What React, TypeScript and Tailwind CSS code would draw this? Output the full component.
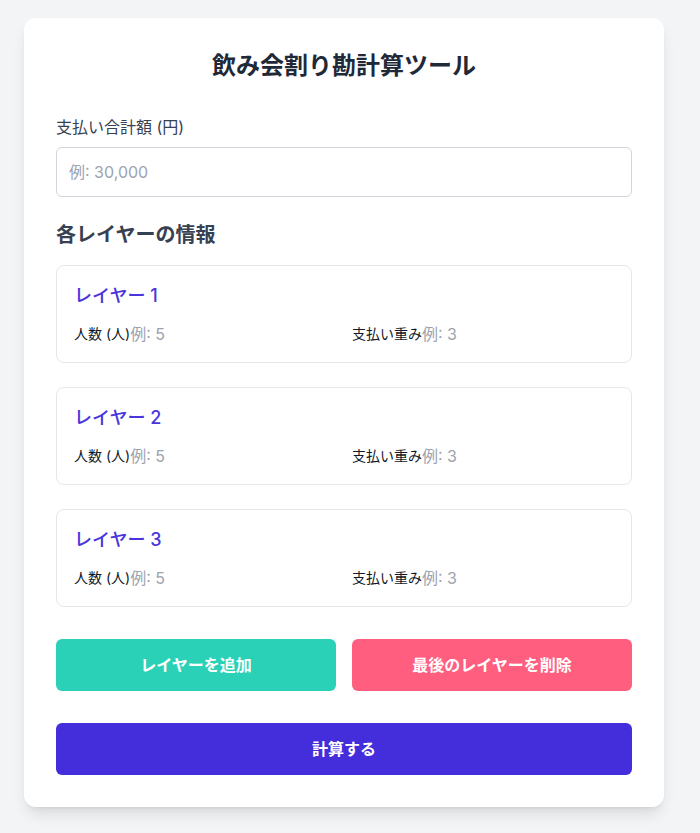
import React from "react";

const font = { fontFamily: '"Inter", "Noto Sans CJK JP", sans-serif' };

function Layer({ n }: { n: number }) {
  return (
    <div className="rounded-lg border border-gray-200 bg-white px-[17px] pt-4 pb-4">
      <h3 className="mb-3 text-lg font-medium leading-7 text-[#4a35dd]">レイヤー {n}</h3>
      <div className="grid grid-cols-2 gap-4">
        <div className="flex items-center whitespace-nowrap">
          <label className="text-sm text-[#111827]">人数 (人)</label>
          <input
            type="number"
            placeholder="例: 5"
            className="w-40 bg-transparent text-base leading-6 outline-none placeholder:text-[#9ca3af]"
          />
        </div>
        <div className="flex items-center whitespace-nowrap">
          <label className="text-sm text-[#111827]">支払い重み</label>
          <input
            type="number"
            placeholder="例: 3"
            className="w-40 bg-transparent text-base leading-6 outline-none placeholder:text-[#9ca3af]"
          />
        </div>
      </div>
    </div>
  );
}

export default function App() {
  return (
    <div className="min-h-[833px] bg-[#f3f4f6] pt-[18px] pl-6 pr-9" style={font}>
      <div className="w-[640px] rounded-xl bg-white px-8 pt-8 pb-8 shadow-lg">
        <h1 className="text-center text-2xl font-bold leading-8 text-[#1f2937]">
          飲み会割り勘計算ツール
        </h1>
        <label className="mt-[33px] block text-base leading-6 text-[#374151]">
          支払い合計額 (円)
        </label>
        <input
          type="number"
          placeholder="例: 30,000"
          className="mt-2 block h-[50px] w-full rounded-md border border-gray-300 px-3 text-base outline-none placeholder:text-[#9ca3af]"
        />
        <h2 className="mt-6 text-xl font-semibold leading-7 text-[#374151]">
          各レイヤーの情報
        </h2>
        <div className="mt-4 flex flex-col gap-6">
          <Layer n={1} />
          <Layer n={2} />
          <Layer n={3} />
        </div>
        <div className="mt-8 grid grid-cols-2 gap-4">
          <button className="h-[52px] rounded-md bg-[#2bd1b6] text-base font-bold text-white">
            レイヤーを追加
          </button>
          <button className="h-[52px] rounded-md bg-[#ff5e7f] text-base font-bold text-white">
            最後のレイヤーを削除
          </button>
        </div>
        <button className="mt-8 h-[52px] w-full rounded-md bg-[#442ddb] text-base font-bold text-white">
          計算する
        </button>
      </div>
    </div>
  );
}
